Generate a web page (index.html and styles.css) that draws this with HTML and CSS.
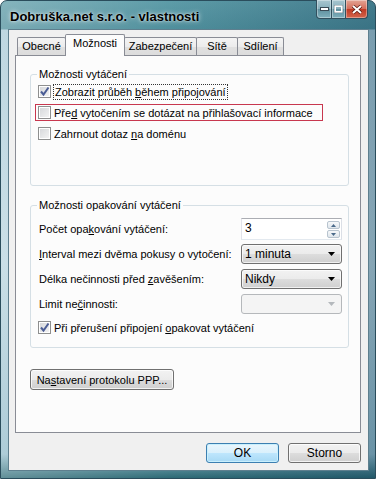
FILE: index.html
```html
<!DOCTYPE html>
<html lang="cs">
<head>
  <meta charset="UTF-8">
  <title>Dobruška.net s.r.o. - vlastnosti</title>
  <link rel="stylesheet" href="styles.css">
</head>
<body>

  <div class="window">
    <div class="titlebar">
      <span class="title">Dobruška.net s.r.o. - vlastnosti</span>
      <div class="caption-buttons">
        <span class="cap-btn cap-min">
          <svg width="9" height="4" viewBox="0 0 9 4"><rect x="0.5" y="0.5" width="8" height="3" fill="#fff" stroke="#3a4a55" stroke-width="1"/></svg>
        </span>
        <span class="cap-btn cap-max">
          <svg width="9" height="8" viewBox="0 0 9 8"><rect x="1" y="1" width="7" height="6" fill="none" stroke="#fff" stroke-width="2"/><rect x="0" y="0" width="9" height="8" fill="none" stroke="#3a4a55" stroke-width="0.6"/></svg>
        </span>
        <span class="cap-btn cap-close">
          <svg width="10" height="9" viewBox="0 0 10 9"><path d="M1 1 L9 8 M9 1 L1 8" stroke="#5a1a12" stroke-width="3.4"/><path d="M1 1 L9 8 M9 1 L1 8" stroke="#fff" stroke-width="2"/></svg>
        </span>
      </div>
    </div>

    <div class="client">
      <div class="tabs">
        <span class="tab tab-general">Obecné</span>
        <span class="tab tab-options active">Možnosti</span>
        <span class="tab tab-security">Zabezpečení</span>
        <span class="tab tab-network">Sítě</span>
        <span class="tab tab-sharing">Sdílení</span>
      </div>

      <div class="panel">
        <fieldset class="group group-dial">
          <legend>Možnosti vytáčení</legend>
          <label class="check-row">
            <span class="checkbox checked">
              <svg width="11" height="11" viewBox="0 0 11 11"><path d="M2 5.5 L4.5 8.5 L9.5 1.5" fill="none" stroke="#4b5d95" stroke-width="2"/></svg>
            </span>
            <span class="focus">Zobrazit průběh <u>b</u>ěhem připojování</span>
          </label>
          <label class="check-row highlight">
            <span class="checkbox"></span>
            <span>Pře<u>d</u> vytočením se dotázat na přihlašovací informace</span>
          </label>
          <label class="check-row">
            <span class="checkbox"></span>
            <span>Zahrnout dotaz <u>n</u>a doménu</span>
          </label>
        </fieldset>

        <fieldset class="group group-redial">
          <legend>Možnosti opakování vytáčení</legend>
          <div class="form-grid">
            <span class="field-label">Počet opa<u>k</u>ování vytáčení:</span>
            <div class="spinner">
              <span class="spinner-value">3</span>
              <span class="spinner-arrows">
                <span class="spin-btn"><svg width="5" height="3" viewBox="0 0 5 3"><path d="M0 3 L2.5 0 L5 3 Z" fill="#4a6a8a"/></svg></span>
                <span class="spin-btn"><svg width="5" height="3" viewBox="0 0 5 3"><path d="M0 0 L2.5 3 L5 0 Z" fill="#4a6a8a"/></svg></span>
              </span>
            </div>

            <span class="field-label"><u>I</u>nterval mezi dvěma pokusy o vytočení:</span>
            <div class="combo">
              <span>1 minuta</span>
              <svg width="7" height="4" viewBox="0 0 7 4"><path d="M0 0 L7 0 L3.5 4 Z" fill="#000"/></svg>
            </div>

            <span class="field-label">Délka nečinnosti před <u>z</u>avěšením:</span>
            <div class="combo">
              <span>Nikdy</span>
              <svg width="7" height="4" viewBox="0 0 7 4"><path d="M0 0 L7 0 L3.5 4 Z" fill="#000"/></svg>
            </div>

            <span class="field-label">Limit ne<u>č</u>innosti:</span>
            <div class="combo disabled">
              <span></span>
              <svg width="7" height="4" viewBox="0 0 7 4"><path d="M0 0 L7 0 L3.5 4 Z" fill="#b4b8bc"/></svg>
            </div>
          </div>
          <label class="check-row">
            <span class="checkbox checked">
              <svg width="11" height="11" viewBox="0 0 11 11"><path d="M2 5.5 L4.5 8.5 L9.5 1.5" fill="none" stroke="#4b5d95" stroke-width="2"/></svg>
            </span>
            <span>Při přerušení připojení <u>o</u>pakovat vytáčení</span>
          </label>
        </fieldset>

        <button class="btn btn-ppp">Na<u>s</u>tavení protokolu PPP...</button>
      </div>

      <div class="dialog-buttons">
        <button class="btn btn-default">OK</button>
        <button class="btn">Storno</button>
      </div>
    </div>
  </div>

</body>
</html>
```

FILE: styles.css
```css
body {
  margin: 0;
  font-family: 'Liberation Sans', Arial, sans-serif;
  font-size: 11px;
  color: #000;
}

.window {
  width: 376px;
  height: 479px;
  box-sizing: border-box;
  border: 1px solid #2a4d5c;
  border-radius: 7px 7px 0 0;
  padding: 0 6px 7px 7px;
  display: flex;
  flex-direction: column;
  background:
    linear-gradient(to right, rgba(255,255,255,0.25), rgba(255,255,255,0) 45%, rgba(0,40,70,0.28)),
    linear-gradient(to bottom, #5d9ca8 0, #4f8f9c 28px, #a9cad7 29px, #b9d5df 55%, #93bccb 95%, #2d6a75 100%);
}

/* title bar */
.titlebar {
  height: 28px;
  display: flex;
  align-items: flex-start;
  flex-shrink: 0;
}

.title {
  margin: 8px 0 0 2px;
  font-size: 13px;
  font-weight: bold;
  line-height: 15px;
  text-shadow: 0 0 5px rgba(255,255,255,0.85), 0 0 2px rgba(255,255,255,0.6);
}

.caption-buttons {
  margin: -1px 1px 0 auto;
  display: flex;
}

.cap-btn {
  height: 18px;
  border: 1px solid #31505e;
  border-top: none;
  display: flex;
  align-items: center;
  justify-content: center;
  box-shadow: inset 0 0 0 1px rgba(255,255,255,0.35);
}

.cap-min {
  width: 14px;
  border-radius: 0 0 0 4px;
  background: linear-gradient(to bottom, #a9c7d0 0, #86aebb 50%, #5e8f9e 51%, #7fb0bd 100%);
}

.cap-max {
  width: 13px;
  border-left: none;
  background: linear-gradient(to bottom, #a9c7d0 0, #86aebb 50%, #5e8f9e 51%, #7fb0bd 100%);
}

.cap-close {
  width: 21px;
  border-left: none;
  border-radius: 0 0 4px 0;
  background: linear-gradient(to bottom, #e3a595 0, #d36b58 50%, #c03a24 51%, #d4654c 100%);
}

/* client area */
.client {
  flex: 1;
  background: #f0f0f0;
  border: 1px solid #5e7f8e;
  padding: 4px 7px 7px 6px;
  display: flex;
  flex-direction: column;
}

.tabs {
  display: flex;
  align-items: flex-end;
  padding-left: 2px;
  height: 21px;
  flex-shrink: 0;
}

.tab {
  height: 17px;
  box-sizing: content-box;
  line-height: 16px;
  margin-left: -1px;
  border: 1px solid #898c95;
  border-bottom: none;
  border-radius: 2px 2px 0 0;
  background: linear-gradient(to bottom, #f4f4f4 0, #ececec 50%, #e0e0e0 51%, #dcdcdc 100%);
  text-align: center;
}

.tab:first-child {
  margin-left: 0;
}

.tab-general { width: 47px; }
.tab-options { width: 58px; }
.tab-security { width: 71px; }
.tab-network { width: 40px; }
.tab-sharing { width: 45px; }

.tab.active {
  height: 21px;
  line-height: 17px;
  margin-bottom: -1px;
  background: #fcfcfc;
  position: relative;
  z-index: 1;
}

.panel {
  flex: 1;
  border: 1px solid #898c95;
  background: #fcfcfc;
  padding: 12px 11px 0 14px;
}

/* group boxes */
.group {
  margin: 0;
  border: 1px solid #d5dfe5;
  border-radius: 3px;
  padding: 2px 6px 43px 6px;
}

.group legend {
  padding: 0 2px;
  line-height: 13px;
}

.group-redial {
  margin-top: 13px;
  padding-top: 6px;
  padding-bottom: 11px;
}

.check-row {
  display: flex;
  align-items: center;
  width: fit-content;
  height: 17px;
  box-sizing: border-box;
  border: 1px solid transparent;
  padding: 0 9px 0 2px;
  margin: 4px 0 0 -2px;
  gap: 3px;
}

.check-row:first-of-type {
  margin-top: 0;
}

.check-row.highlight {
  border-color: #c8374f;
}

.focus {
  outline: 1px dotted #333;
  padding: 0 1px;
  line-height: 14px;
}

.checkbox {
  width: 13px;
  height: 13px;
  box-sizing: border-box;
  border: 1px solid #8e8f8f;
  background: linear-gradient(135deg, #d4d6d9 0, #f5f5f5 100%);
  box-shadow: inset 0 0 0 1px #fff;
  display: flex;
  align-items: center;
  justify-content: center;
  flex-shrink: 0;
}

.form-grid {
  display: grid;
  grid-template-columns: 1fr 101px;
  grid-auto-rows: 22px;
  row-gap: 3px;
  align-items: center;
}

.form-grid + .check-row {
  margin-top: 4px;
}

.field-label {
  padding-left: 2px;
}

.spinner {
  height: 22px;
  box-sizing: border-box;
  border: 1px solid #abadb3;
  border-color: #abadb3 #dbdfe6 #e3e9ef #e2e3ea;
  background: #fff;
  display: flex;
  align-items: flex-start;
  justify-content: space-between;
  padding: 2px 1px 0 3px;
}

.spinner-value {
  font-size: 12px;
  line-height: 14px;
}

.spinner-arrows {
  display: flex;
  flex-direction: column;
  gap: 1px;
}

.spin-btn {
  width: 13px;
  height: 8px;
  box-sizing: border-box;
  border: 1px solid #b8c4cf;
  border-radius: 2px;
  background: linear-gradient(to bottom, #f6f8fa, #dfe6ec);
  display: flex;
  align-items: center;
  justify-content: center;
}

.combo {
  height: 20px;
  box-sizing: border-box;
  border: 1px solid #707070;
  border-radius: 3px;
  background: linear-gradient(to bottom, #f2f2f2 0, #ebebeb 50%, #dddddd 51%, #cfcfcf 100%);
  box-shadow: inset 0 0 0 1px rgba(255,255,255,0.7);
  display: flex;
  align-items: center;
  justify-content: space-between;
  padding: 0 6px 0 3px;
  font-size: 12px;
}

.combo.disabled {
  border-color: #b5b8bb;
  background: #f4f4f4;
  box-shadow: none;
}

/* buttons */
.btn {
  font-family: inherit;
  font-size: 11px;
  color: #000;
  height: 21px;
  border: 1px solid #707070;
  border-radius: 3px;
  background: linear-gradient(to bottom, #f2f2f2 0, #ebebeb 50%, #dddddd 51%, #cfcfcf 100%);
  box-shadow: inset 0 0 0 1px rgba(255,255,255,0.75);
  padding: 0;
}

.btn-ppp {
  display: block;
  width: 144px;
  margin-top: 21px;
}

.dialog-buttons {
  display: flex;
  justify-content: flex-end;
  gap: 9px;
  margin-top: 10px;
  flex-shrink: 0;
}

.dialog-buttons .btn {
  width: 73px;
  height: 20px;
  font-size: 12px;
}

.btn-default {
  border-color: #3c7fb1;
  background: linear-gradient(to bottom, #eaf6fd 0, #d9f0fc 50%, #bee6fd 51%, #a7d9f5 100%);
  box-shadow: inset 0 0 0 1px #c9f0fd;
}
```
